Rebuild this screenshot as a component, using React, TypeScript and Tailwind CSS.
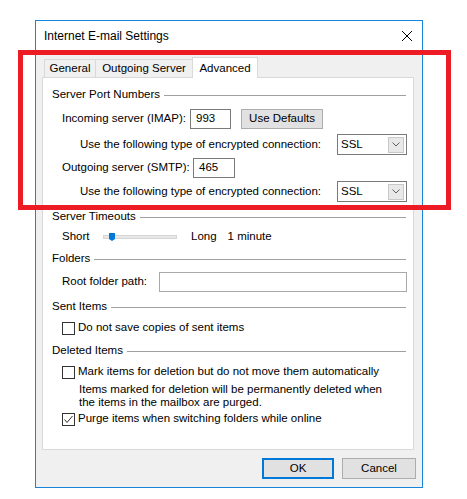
import React from 'react';

const font = { fontFamily: '"Liberation Sans", Arial, sans-serif' };

const Group = ({ title, className = '' }: { title: string; className?: string }) => (
    <div className={`flex items-center h-[16px] ${className}`}>
        <span className="whitespace-nowrap">{title}</span>
        <div className="flex-1 h-px bg-[#a0a0a0] ml-[4px]" />
    </div>
);

const Select = () => (
    <div className="ml-auto w-[70px] h-[21px] shrink-0 border border-[#7a7a7a] bg-white flex items-center justify-between pl-[3px] pr-[2px] -mr-px">
        <span>SSL</span>
        <div className="w-[16px] h-[16px] border border-[#c8c8c8] bg-[#e8e8e8] flex items-center justify-center">
            <svg width="8" height="5" viewBox="0 0 8 5" fill="none" stroke="#606060" strokeWidth="1">
                <path d="M0.5 0.5 L4 4 L7.5 0.5" />
            </svg>
        </div>
    </div>
);

const Checkbox = ({ checked = false }: { checked?: boolean }) => (
    <div className="w-[13px] h-[13px] border border-[#333333] bg-white flex items-center justify-center shrink-0">
        {checked && (
            <svg width="11" height="11" viewBox="0 0 11 11" fill="none" stroke="#333333" strokeWidth="1">
                <path d="M1.5 5.5 L4 8.5 L9.5 2" />
            </svg>
        )}
    </div>
);

export default function App() {
    return (
        <div className="relative w-[467px] h-[499px] bg-white overflow-hidden text-[11.5px] text-black whitespace-nowrap" style={font}>
            <div className="ml-[35px] pt-[20px]">
                <div className="w-[388px] h-[468px] border border-[#1883d7] bg-[#f0f0f0] flex flex-col">
                    {/* title bar */}
                    <div className="h-[30px] bg-white flex items-center justify-between pl-[8px] pr-[10px]">
                        <span className="text-[12px]">Internet E-mail Settings</span>
                        <svg width="10" height="10" viewBox="0 0 10 10" stroke="#000" strokeWidth="1">
                            <path d="M0 0 L10 10 M10 0 L0 10" />
                        </svg>
                    </div>

                    <div className="flex-1 pl-[6px] pr-[8px]">
                        {/* tabs */}
                        <div className="flex items-end h-[20px] mt-[6px] ml-[2px] relative z-10">
                            <div className="w-[52px] h-[18px] border border-b-0 border-[#d9d9d9] bg-[#f0f0f0] flex items-center justify-center">General</div>
                            <div className="w-[98px] h-[18px] -ml-px border border-b-0 border-[#d9d9d9] bg-[#f0f0f0] flex items-center justify-center">Outgoing Server</div>
                            <div className="w-[66px] h-[21px] -ml-px -mb-px border border-b-0 border-[#d9d9d9] bg-white flex items-start justify-center pt-[2px]">Advanced</div>
                        </div>

                        {/* panel */}
                        <div className="h-[373px] border border-[#d9d9d9] bg-white pl-[9px] pr-[7px]">
                            <Group title="Server Port Numbers" className="mt-[9px]" />
                            <div className="flex items-center h-[20px] mt-[6px] pl-[10px]">
                                <span className="w-[128px] shrink-0">Incoming server (IMAP):</span>
                                <div className="w-[41px] h-[20px] border border-[#7a7a7a] flex items-center pl-[5px]">993</div>
                                <div className="w-[82px] h-[20px] ml-[10px] border border-[#adadad] bg-[#e1e1e1] flex items-center justify-center">Use Defaults</div>
                            </div>
                            <div className="flex items-center h-[21px] mt-[5px] pl-[28px]">
                                <span>Use the following type of encrypted connection:</span>
                                <Select />
                            </div>
                            <div className="flex items-center h-[20px] mt-[3px] pl-[10px]">
                                <span className="w-[131px] shrink-0">Outgoing server (SMTP):</span>
                                <div className="w-[42px] h-[20px] border border-[#7a7a7a] flex items-center pl-[5px]">465</div>
                            </div>
                            <div className="flex items-center h-[21px] mt-[3px] pl-[28px]">
                                <span>Use the following type of encrypted connection:</span>
                                <Select />
                            </div>

                            <Group title="Server Timeouts" className="mt-[7px]" />
                            <div className="flex items-center h-[16px] mt-[4px] pl-[10px]">
                                <span className="w-[41px]">Short</span>
                                <div className="relative w-[74px] h-[4px] bg-[#e7e7e7] border border-[#d6d6d6]">
                                    <svg className="absolute left-[5px] -top-[3px]" width="6" height="8" viewBox="0 0 6 8">
                                        <path d="M0 0 H6 V6 L3 8 L0 6 Z" fill="#0078d7" />
                                    </svg>
                                </div>
                                <span className="ml-[14px]">Long</span>
                                <span className="ml-[11px]">1 minute</span>
                            </div>

                            <Group title="Folders" className="mt-[6px]" />
                            <div className="flex items-center h-[20px] mt-[5px] pl-[10px]">
                                <span className="w-[97px] shrink-0">Root folder path:</span>
                                <div className="flex-1 h-[20px] border border-[#a9a9a9] -mr-px" />
                            </div>

                            <Group title="Sent Items" className="mt-[7px]" />
                            <div className="flex items-center h-[16px] mt-[5px] pl-[10px] gap-[3px]">
                                <Checkbox />
                                <span>Do not save copies of sent items</span>
                            </div>

                            <Group title="Deleted Items" className="mt-[7px]" />
                            <div className="flex items-center h-[16px] mt-[5px] pl-[10px] gap-[3px]">
                                <Checkbox />
                                <span>Mark items for deletion but do not move them automatically</span>
                            </div>
                            <div className="mt-[3px] pl-[27px] leading-[13px]">
                                Items marked for deletion will be permanently deleted when
                                <br />
                                the items in the mailbox are purged.
                            </div>
                            <div className="flex items-center h-[16px] mt-[2px] pl-[10px] gap-[3px]">
                                <Checkbox checked />
                                <span>Purge items when switching folders while online</span>
                            </div>
                        </div>

                        {/* buttons */}
                        <div className="flex justify-end gap-[8px] mt-[8px] -mr-[2px]">
                            <div className="w-[72px] h-[21px] border-2 border-[#0078d7] bg-[#e1e1e1] flex items-center justify-center">OK</div>
                            <div className="w-[74px] h-[21px] border border-[#adadad] bg-[#e1e1e1] flex items-center justify-center">Cancel</div>
                        </div>
                    </div>
                </div>
            </div>

            {/* red highlight */}
            <div className="absolute left-[18px] top-[50px] w-[433px] h-[160px] border-[5px] border-[#ed1c24] pointer-events-none" />
        </div>
    );
}
